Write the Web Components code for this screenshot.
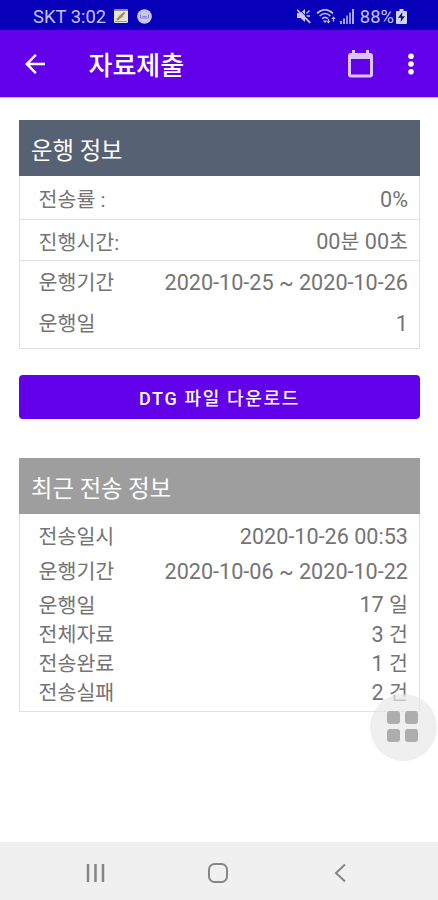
<!DOCTYPE html>
<html lang="ko">
<head>
<meta charset="utf-8">
<meta name="viewport" content="width=device-width, initial-scale=1">
<title>자료제출</title>
<style>
    :root {
        --primary: #6200ea;
        --primary-dark: #0800b8;
        --line: #e0e0e0;
        --text: #747474;
        --main-font: Roboto, "Noto Sans CJK KR", sans-serif;
    }
    body {
        margin: 0;
        background: #fff;
        font-family: var(--main-font);
        color: var(--text);
    }
</style>
</head>
<body>
<submit-screen>
    <status-bar slot="top" carrier="SKT" time="3:02" battery="88%"></status-bar>
    <app-bar slot="top">자료제출</app-bar>

    <info-card style="--rows-pad: 0 0 5px">
        <span slot="title">운행 정보</span>
        <info-row line style="--row-height: 44px"><span slot="label">전송률 :</span>0%</info-row>
        <info-row line style="--row-height: 41px"><span slot="label">진행시간:</span>00<b>분</b> 00<b>초</b></info-row>
        <info-row style="--row-height: 41px"><span slot="label">운행기간</span>2020-10-25 ~ 2020-10-26</info-row>
        <info-row style="--row-height: 41px"><span slot="label">운행일</span>1</info-row>
    </info-card>

    <raised-button>DTG 파일 다운로드</raised-button>

    <info-card style="--head: #9e9e9e; --rows-pad: 4px 0 5px">
        <span slot="title">최근 전송 정보</span>
        <info-row style="--row-height: 34px"><span slot="label">전송일시</span>2020-10-26 00:53</info-row>
        <info-row style="--row-height: 37px"><span slot="label">운행기간</span>2020-10-06 ~ 2020-10-22</info-row>
        <info-row style="--row-height: 30px"><span slot="label">운행일</span>17 <b>일</b></info-row>
        <info-row><span slot="label">전체자료</span>3 <b>건</b></info-row>
        <info-row><span slot="label">전송완료</span>1 <b>건</b></info-row>
        <info-row><span slot="label">전송실패</span>2 <b>건</b></info-row>
    </info-card>

    <menu-bubble slot="overlay"></menu-bubble>
    <nav-bar slot="bottom"></nav-bar>
</submit-screen>

<script>
class SubmitScreen extends HTMLElement {
    constructor() {
        super();
        this.attachShadow({mode: "open"}).innerHTML = `
            <style>
            :host {
                display: flex;
                flex-direction: column;
                height: 900px;
                position: relative;
                overflow: hidden;
            }
            main {
                flex: 1;
                display: flex;
                flex-direction: column;
                padding: 23px 18px 0 19px;
            }
            ::slotted(raised-button) {
                margin: 26px 0 39px;
            }
            </style>
            <slot name="top"></slot>
            <main><slot></slot></main>
            <slot name="overlay"></slot>
            <slot name="bottom"></slot>
        `;
    }
}

class StatusBar extends HTMLElement {
    constructor() {
        super();
        this.attachShadow({mode: "open"});
    }

    connectedCallback() {
        this.shadowRoot.innerHTML = `
            <style>
            :host {
                display: flex;
                justify-content: space-between;
                align-items: center;
                box-sizing: border-box;
                height: 30px;
                padding: 2px 31px 0 33px;
                background: var(--primary-dark);
                color: #c2c2f4;
                font-size: 18.4px;
            }
            div {
                display: flex;
                align-items: center;
            }
            svg {
                display: block;
            }
            </style>
            <div>
                <span>${this.getAttribute("carrier")} ${this.getAttribute("time")}</span>
                <svg width="14" height="14" viewBox="0 0 14 14" style="margin-left: 8px">
                    <rect width="14" height="14" rx="1" fill="#e4e5dc"/>
                    <path d="M0 0h14v2H0z" fill="#858b9c"/>
                    <path d="M3 11 5 6l3-1 2 3z" fill="#c3c1ad"/>
                    <path d="m3 11 7.5-7.5" stroke="#b98128" stroke-width="2"/>
                    <path d="M1 12.5h12" stroke="#999" stroke-width="1"/>
                </svg>
                <svg width="15" height="15" viewBox="0 0 15 15" style="margin-left: 9px">
                    <circle cx="7.5" cy="7.5" r="7.3" fill="#c6c5f5"/>
                    <path d="M3.5 5.5v3.7M11.5 5.5v3.7M5.5 7.5h4M4 9h7" stroke="#7e7ad6" stroke-width="1" fill="none"/>
                </svg>
            </div>
            <div>
                <svg width="14" height="16" viewBox="0 0 14 16">
                    <path d="M0 5h3.5L8 1v13l-4.5-4H0z" fill="#c9c8f6"/>
                    <path d="m9.5 5.5 3-3M9.5 8H13" stroke="#c9c8f6" stroke-width="1.3"/>
                    <path d="m1.500.5 12.5 13" stroke="#0800b8" stroke-width="1"/>
                    <path d="m.2 1.8 13 13" stroke="#c9c8f6" stroke-width="1.8"/>
                </svg>
                <svg width="20" height="16" viewBox="0 0 20 16" fill="none" stroke="#c2c2f4" stroke-width="1.6" style="margin-left: 5px">
                    <path d="M1 5.3c5-4.7 11-4.7 16 0M3.6 8c3.5-3.2 7.3-3.2 10.8 0M6 10.7c2-1.8 4-1.8 6 0"/>
                    <path d="m9 15-2.2-2.5h4.4z" fill="#c2c2f4" stroke="none"/>
                    <path d="M12.5 11v3.5M17.5 13.5V9.6" stroke-width="1.3"/>
                    <path d="m10.5 13 2 2.4 2-2.4zM15.3 11l2.2-2.5 2.2 2.5z" fill="#c2c2f4" stroke="none"/>
                </svg>
                <svg width="14" height="15" viewBox="0 0 14 15" style="margin-left: 4px">
                    <path d="M0 12h2v3H0zM3 9.5h2V15H3z" fill="#aaa8ec"/>
                    <path d="M6 6.5h2V15H6zM9 3.5h2V15H9z" fill="#8f8be2"/>
                    <path d="M12 0h2v15h-2z" fill="#aaa8ec"/>
                </svg>
                <span style="margin-left: 6px">${this.getAttribute("battery")}</span>
                <svg width="11" height="15" viewBox="0 0 11 15" style="margin-left: 2px">
                    <path d="M3.5 0h4v2H10q1 0 1 1v11q0 1-1 1H1q-1 0-1-1V3q0-1 1-1h2.5z" fill="#d3d2f7"/>
                    <path d="M6.4 3 2 8.7h3L4.6 13 9 7.3H6z" fill="#15126d"/>
                </svg>
            </div>
        `;
    }
}

class AppBar extends HTMLElement {
    constructor() {
        super();
        this.attachShadow({mode: "open"}).innerHTML = `
            <style>
            :host {
                display: flex;
                align-items: center;
                box-sizing: border-box;
                height: 67px;
                padding: 0 24px 0 20px;
                background: var(--primary);
                color: #fff;
                box-shadow: 0 1px 1px #cdb5f5;
            }
            h1 {
                flex: 1;
                margin: 0 0 0 38.5px;
                padding-top: 5px;
                font-size: 26px;
                font-weight: 500;
                line-height: 36px;
            }
            svg {
                display: block;
                fill: #fff;
            }
            </style>
            <svg width="30" height="30" viewBox="0 0 24 24"><path d="M20 11H7.83l5.59-5.59L12 4l-8 8 8 8 1.41-1.41L7.83 13H20z"/></svg>
            <h1><slot></slot></h1>
            <svg width="25" height="28" viewBox="0 0 25 28" style="margin-right: 35px">
                <path d="M3 3h1V0h3v3h11V0h3v3h1q3 0 3 3v18.500q0 3-3 3H3q-3 0-3-3V6q0-3 3-3m0 6v15.500h19V9z" style="fill: #dcc4fb"/>
            </svg>
            <svg width="6" height="22" viewBox="0 0 6 22"><circle cx="3" cy="3.300" r="2.800"/><circle cx="3" cy="11" r="2.800"/><circle cx="3" cy="18.700" r="2.800"/></svg>
        `;
    }
}

class InfoCard extends HTMLElement {
    constructor() {
        super();
        this.attachShadow({mode: "open"}).innerHTML = `
            <style>
            :host {
                display: block;
            }
            header {
                display: flex;
                align-items: center;
                box-sizing: border-box;
                height: 56px;
                padding: 5px 12px 0;
                background: var(--head, #566174);
                color: #fff;
                font-size: 23.3px;
                line-height: 34px;
            }
            section {
                padding: var(--rows-pad);
                border: 1px solid var(--line);
                border-top: 0;
            }
            </style>
            <header><slot name="title"></slot></header>
            <section><slot></slot></section>
        `;
    }
}

class InfoRow extends HTMLElement {
    constructor() {
        super();
        this.attachShadow({mode: "open"}).innerHTML = `
            <style>
            :host {
                display: flex;
                justify-content: space-between;
                align-items: center;
                box-sizing: border-box;
                height: var(--row-height, 29px);
                padding: 2px 11px 0 18.5px;
                font-size: 21.6px;
                line-height: 27px;
                white-space: pre;
            }
            :host([line]) {
                padding-top: 4px;
                border-bottom: 1px solid var(--line);
            }
            .label {
                padding-top: 2px;
                font-size: 20.6px;
            }
            ::slotted(b) {
                font-size: 20.6px;
                font-weight: 400;
            }
            </style>
            <span class="label"><slot name="label"></slot></span>
            <span><slot></slot></span>
        `;
    }
}

class RaisedButton extends HTMLElement {
    constructor() {
        super();
        this.attachShadow({mode: "open"}).innerHTML = `
            <style>
            :host {
                display: block;
            }
            button {
                display: block;
                width: 100%;
                height: 44px;
                padding: 0;
                border: 0;
                border-radius: 4px;
                background: var(--primary);
                color: #fff;
                font: 500 18px var(--main-font);
                letter-spacing: 1.65px;
            }
            </style>
            <button type="button"><slot></slot></button>
        `;
    }
}

class MenuBubble extends HTMLElement {
    constructor() {
        super();
        this.attachShadow({mode: "open"}).innerHTML = `
            <style>
            :host {
                position: absolute;
                right: 1px;
                top: 694px;
                display: grid;
                grid-template-columns: 13px 13px;
                gap: 5px;
                place-content: center;
                box-sizing: border-box;
                width: 67px;
                height: 67px;
                padding: 0 2px 2px 0;
                border-radius: 50%;
                background: rgba(232, 232, 232, .7);
            }
            i {
                height: 13px;
                border-radius: 3px;
                background: #adadad;
            }
            </style>
            <i></i><i></i><i></i><i></i>
        `;
    }
}

class NavBar extends HTMLElement {
    constructor() {
        super();
        this.attachShadow({mode: "open"}).innerHTML = `
            <style>
            :host {
                display: flex;
                justify-content: space-between;
                align-items: center;
                box-sizing: border-box;
                height: 58px;
                padding: 3px 92px 0 86px;
                background: #f0f0f0;
            }
            svg {
                display: block;
                fill: none;
                stroke: #858585;
                stroke-width: 2;
            }
            .home {
                margin-right: 3px;
            }
            </style>
            <svg width="19" height="20" viewBox="0 0 19 20"><path d="M2 1v18M9.500 1v18M17 1v18" stroke-width="2.500"/></svg>
            <svg class="home" width="20" height="20" viewBox="0 0 20 20"><rect x="1" y="1" width="18" height="18" rx="5.500"/></svg>
            <svg width="12" height="20" viewBox="0 0 12 20"><path d="m11 1.500-9 8.500 9 8.500"/></svg>
        `;
    }
}

customElements.define("submit-screen", SubmitScreen);
customElements.define("status-bar", StatusBar);
customElements.define("app-bar", AppBar);
customElements.define("info-card", InfoCard);
customElements.define("info-row", InfoRow);
customElements.define("raised-button", RaisedButton);
customElements.define("menu-bubble", MenuBubble);
customElements.define("nav-bar", NavBar);
</script>
</body>
</html>
